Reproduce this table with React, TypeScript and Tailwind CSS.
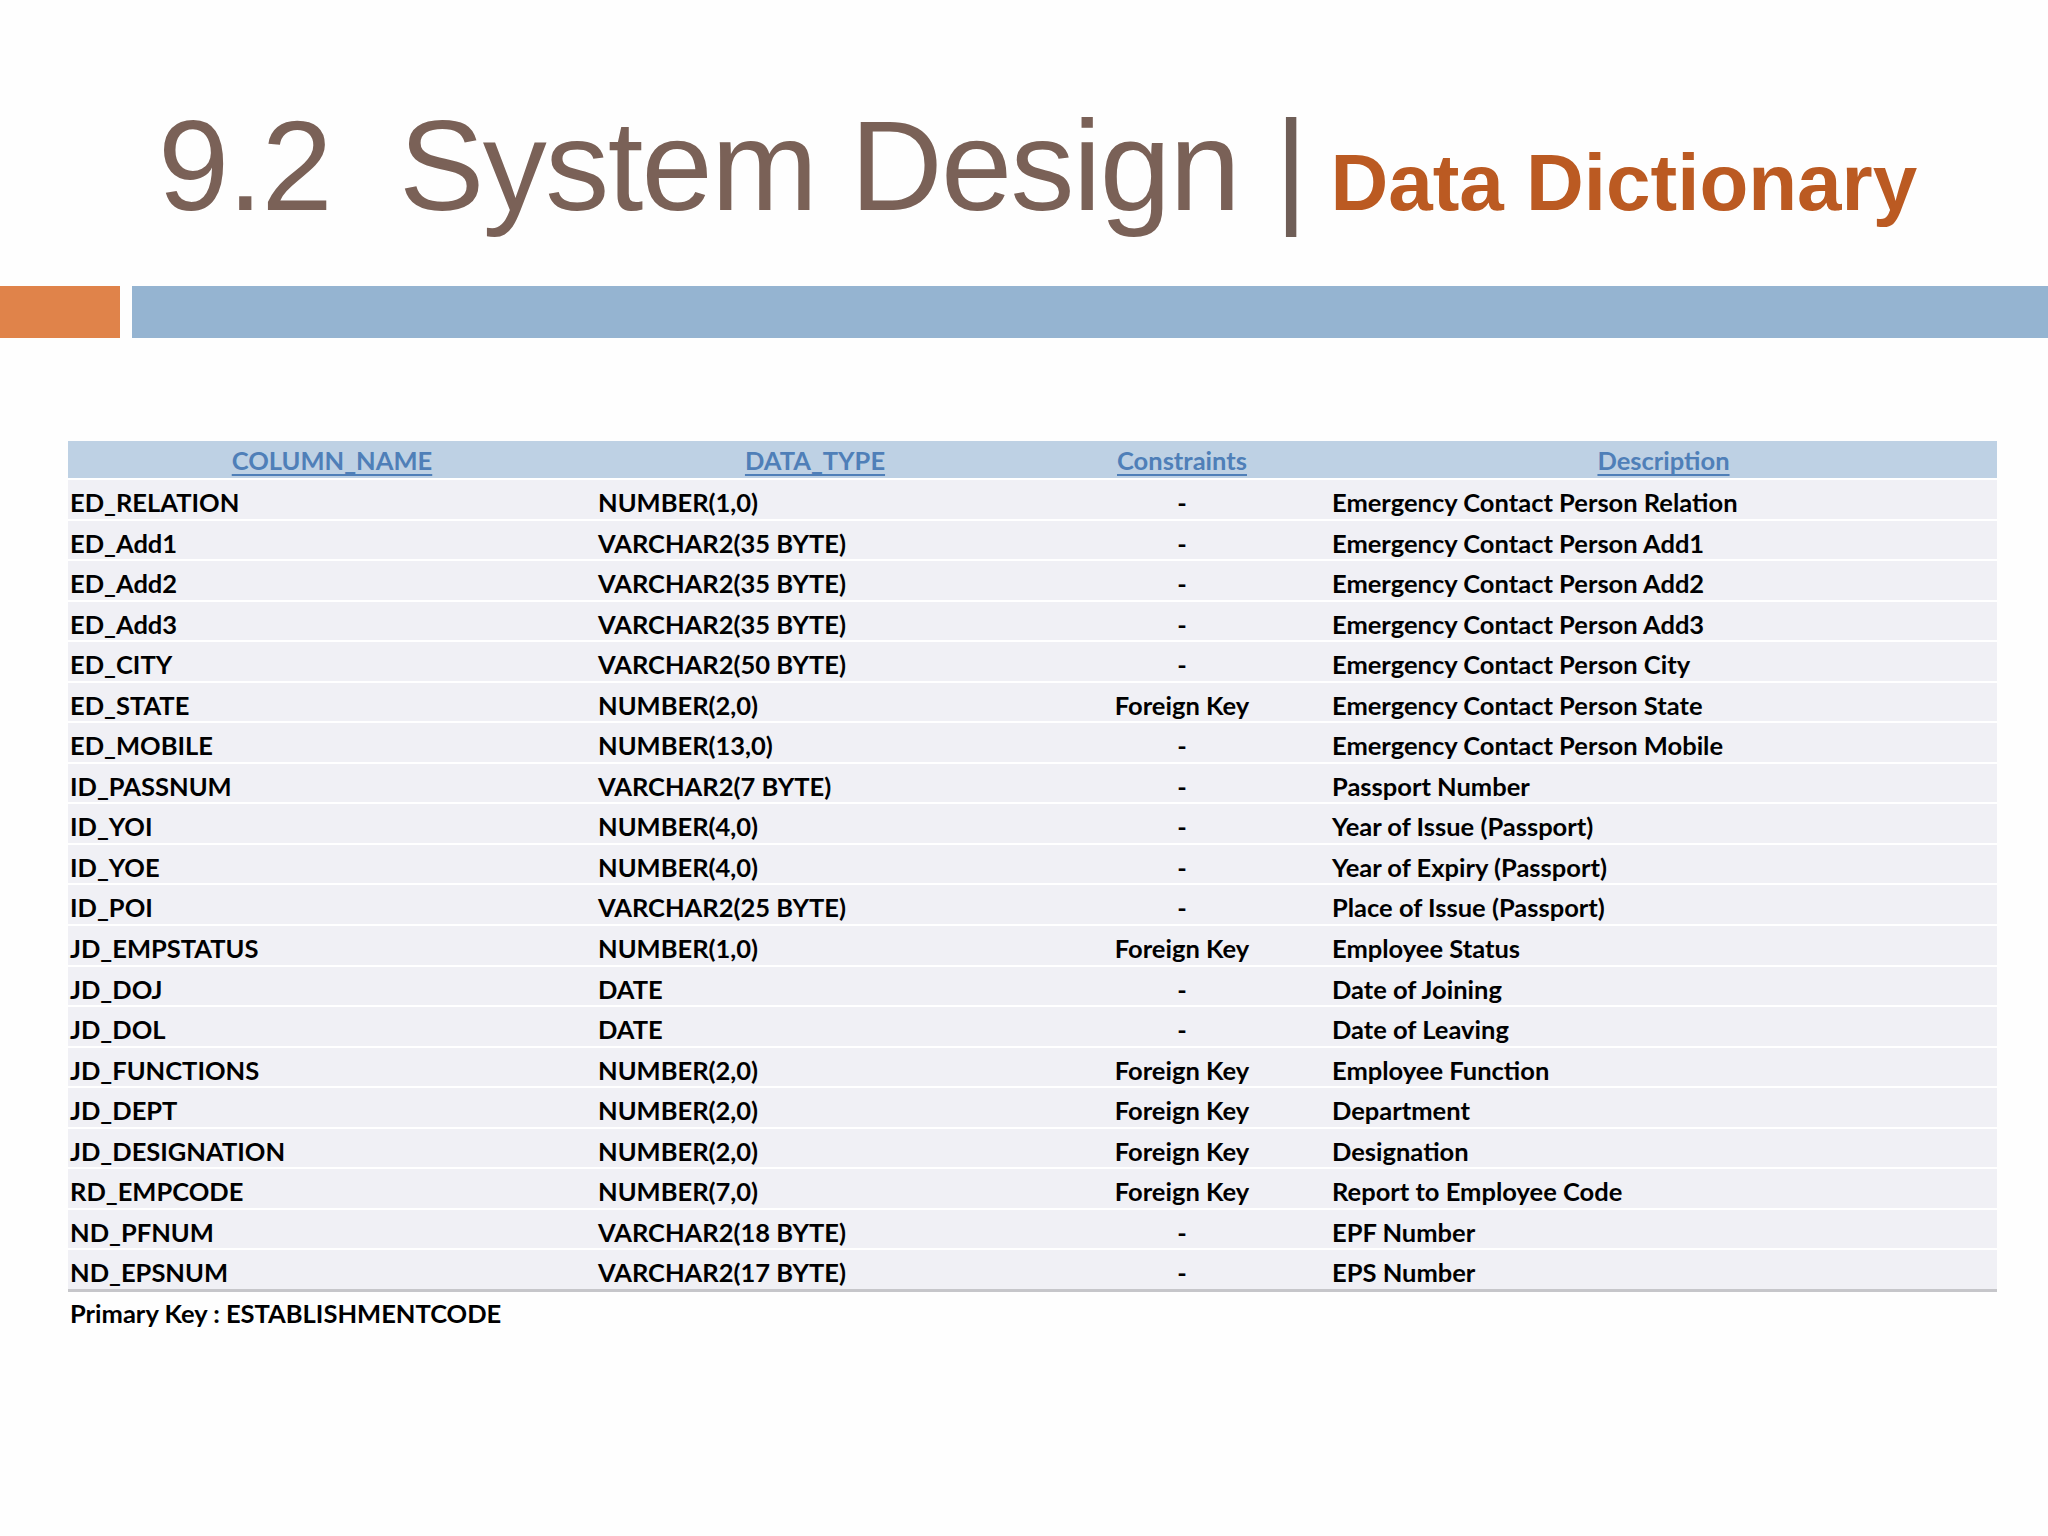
const rows = [
  ['ED_RELATION', 'NUMBER(1,0)', '-', 'Emergency Contact Person Relation'],
  ['ED_Add1', 'VARCHAR2(35 BYTE)', '-', 'Emergency Contact Person Add1'],
  ['ED_Add2', 'VARCHAR2(35 BYTE)', '-', 'Emergency Contact Person Add2'],
  ['ED_Add3', 'VARCHAR2(35 BYTE)', '-', 'Emergency Contact Person Add3'],
  ['ED_CITY', 'VARCHAR2(50 BYTE)', '-', 'Emergency Contact Person City'],
  ['ED_STATE', 'NUMBER(2,0)', 'Foreign Key', 'Emergency Contact Person State'],
  ['ED_MOBILE', 'NUMBER(13,0)', '-', 'Emergency Contact Person Mobile'],
  ['ID_PASSNUM', 'VARCHAR2(7 BYTE)', '-', 'Passport Number'],
  ['ID_YOI', 'NUMBER(4,0)', '-', 'Year of Issue (Passport)'],
  ['ID_YOE', 'NUMBER(4,0)', '-', 'Year of Expiry (Passport)'],
  ['ID_POI', 'VARCHAR2(25 BYTE)', '-', 'Place of Issue (Passport)'],
  ['JD_EMPSTATUS', 'NUMBER(1,0)', 'Foreign Key', 'Employee Status'],
  ['JD_DOJ', 'DATE', '-', 'Date of Joining'],
  ['JD_DOL', 'DATE', '-', 'Date of Leaving'],
  ['JD_FUNCTIONS', 'NUMBER(2,0)', 'Foreign Key', 'Employee Function'],
  ['JD_DEPT', 'NUMBER(2,0)', 'Foreign Key', 'Department'],
  ['JD_DESIGNATION', 'NUMBER(2,0)', 'Foreign Key', 'Designation'],
  ['RD_EMPCODE', 'NUMBER(7,0)', 'Foreign Key', 'Report to Employee Code'],
  ['ND_PFNUM', 'VARCHAR2(18 BYTE)', '-', 'EPF Number'],
  ['ND_EPSNUM', 'VARCHAR2(17 BYTE)', '-', 'EPS Number'],
]

const cols = 'grid grid-cols-[528px_438px_296px_667px]'

export default function App() {
  return (
    <div className="min-h-screen w-[2048px] h-[1536px] bg-[#fefefe] overflow-hidden">
      {/* Title */}
      <h1 className="pt-[102px] pl-[158px] leading-none whitespace-nowrap font-['Liberation_Sans',Arial,sans-serif] text-[128px] text-[#7a6157]">
        <span className="tracking-[-1.6px]">9.2&nbsp; System Design</span> <span className="text-[#6f5e57]">|</span>{' '}
        <span className="ml-[-13px] text-[80px] font-bold text-[#bb5a22]">Data Dictionary</span>
      </h1>

      {/* Accent bars */}
      <div className="mt-[56px] flex h-[52px] gap-[12px]">
        <div className="w-[120px] bg-[#e0834a]" />
        <div className="flex-1 bg-[#95b4d1]" />
      </div>

      {/* Table */}
      <div className="ml-[68px] mt-[103px] w-[1929px] font-['Lato','Open_Sans',sans-serif] font-bold text-[25.5px] text-black">
        <div className={`${cols} h-[37px] items-center bg-[#bed1e4] text-[#4f7fb8]`}>
          <div className="text-center underline underline-offset-4">COLUMN_NAME</div>
          <div className="text-center underline underline-offset-4">DATA_TYPE</div>
          <div className="text-center underline underline-offset-4">Constraints</div>
          <div className="text-center underline underline-offset-4">Description</div>
        </div>
        {rows.map((r) => (
          <div key={r[0]} className={`${cols} h-[40.56px] items-center border-t-2 border-white bg-[#f0f0f5] pt-[3px]`}>
            <div className="pl-[2px]">{r[0]}</div>
            <div className="pl-[2px]">{r[1]}</div>
            <div className="text-center">{r[2]}</div>
            <div className="pl-[2px]">{r[3]}</div>
          </div>
        ))}
        <div className="h-[3px] bg-[#c6c6ca]" />
        <div className="flex h-[40px] items-center pl-[2px] pt-[2px]">Primary Key : ESTABLISHMENTCODE</div>
      </div>
    </div>
  )
}
